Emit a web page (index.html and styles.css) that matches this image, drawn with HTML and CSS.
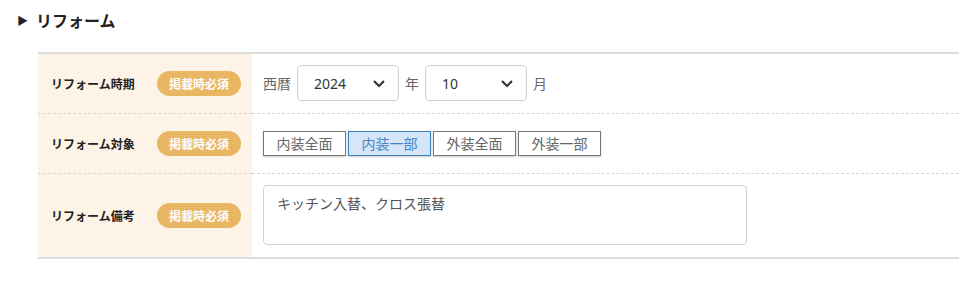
FILE: index.html
```html
<!DOCTYPE html>
<html lang="ja">
<head>
    <meta charset="UTF-8">
    <title>リフォーム</title>
    <link rel="stylesheet" href="styles.css">
</head>
<body>
    <h2 class="section-title"><span class="arrow">▶</span>リフォーム</h2>
    <table class="form-table">
        <tr>
            <th><span class="label">リフォーム時期</span><span class="badge">掲載時必須</span></th>
            <td>
                <div class="date-row">
                    <span>西暦</span>
                    <div class="select"><span>2024</span><svg width="14" height="9" viewBox="0 0 14 9"><path d="M2 2l5 5 5-5" fill="none" stroke="#333" stroke-width="2.2"/></svg></div>
                    <span>年</span>
                    <div class="select"><span>10</span><svg width="14" height="9" viewBox="0 0 14 9"><path d="M2 2l5 5 5-5" fill="none" stroke="#333" stroke-width="2.2"/></svg></div>
                    <span>月</span>
                </div>
            </td>
        </tr>
        <tr>
            <th><span class="label">リフォーム対象</span><span class="badge">掲載時必須</span></th>
            <td>
                <div class="choices">
                    <span class="choice">内装全面</span>
                    <span class="choice active">内装一部</span>
                    <span class="choice">外装全面</span>
                    <span class="choice">外装一部</span>
                </div>
            </td>
        </tr>
        <tr class="tall">
            <th><span class="label">リフォーム備考</span><span class="badge">掲載時必須</span></th>
            <td>
                <div class="textarea">キッチン入替、クロス張替</div>
            </td>
        </tr>
    </table>
</body>
</html>
```

FILE: styles.css
```css
* {
    margin: 0;
    padding: 0;
    box-sizing: border-box;
}

body {
    font-family: "Noto Sans CJK JP", "Noto Sans", sans-serif;
    background: #fff;
    color: #333;
    padding: 8px 19px 0 17px;
}

.section-title {
    font-size: 16px;
    font-weight: bold;
    color: #222;
    line-height: 24px;
    display: flex;
    align-items: center;
    margin-bottom: 20px;
}

.arrow {
    font-size: 11px;
    margin-right: 8px;
}

.form-table {
    margin-left: 21px;
    width: 921px;
    border-collapse: collapse;
    border-top: 2px solid #ddd;
    border-bottom: 2px solid #ddd;
}

.form-table tr + tr {
    border-top: 1px dashed #d6d6d6;
}

.form-table th {
    width: 214px;
    height: 60px;
    background: #fdf3e6;
    text-align: left;
    padding: 0 11px 0 13px;
    vertical-align: middle;
    white-space: nowrap;
}

.form-table tr.tall th {
    height: 85px;
}

.label {
    display: inline-block;
    width: 106px;
    font-size: 12px;
    font-weight: bold;
    color: #222;
}

.badge {
    display: inline-block;
    width: 84px;
    height: 25px;
    line-height: 25px;
    border-radius: 13px;
    background: #e9b664;
    color: #fff;
    font-size: 12px;
    font-weight: bold;
    text-align: center;
}

.form-table td {
    padding: 0 11px;
    vertical-align: middle;
}

.date-row {
    display: flex;
    align-items: center;
    gap: 6px;
    font-size: 14px;
    color: #666;
}

.select {
    width: 102px;
    height: 36px;
    border: 1px solid #ccd0d6;
    border-radius: 4px;
    display: flex;
    align-items: center;
    justify-content: space-between;
    padding: 0 12px 0 16px;
    color: #333;
    font-size: 14px;
    font-family: "Noto Sans", sans-serif;
}

.choices {
    display: flex;
    gap: 2px;
}

.choice {
    width: 83px;
    height: 25px;
    line-height: 23px;
    border: 1px solid #777;
    text-align: center;
    font-size: 14px;
    color: #666;
    background: #fff;
    box-shadow: 0 1px 2px rgba(0,0,0,0.2);
}

.choice.active {
    background: #d5e5fa;
    border-color: #3a7fb8;
    color: #4a86c4;
}

.textarea {
    width: 484px;
    height: 60px;
    border: 1px solid #cfd3d9;
    border-radius: 4px;
    padding: 7px 13px;
    font-size: 14px;
    color: #555;
}
```
